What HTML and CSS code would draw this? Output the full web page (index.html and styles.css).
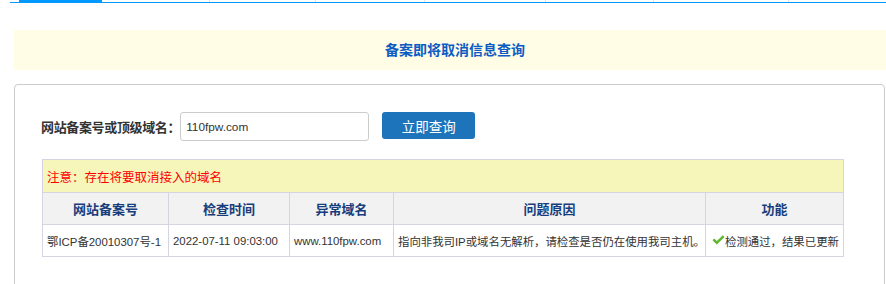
FILE: index.html
```html
<!DOCTYPE html>
<html lang="zh-CN">
<head>
    <meta charset="UTF-8">
    <title>备案即将取消信息查询</title>
    <link rel="stylesheet" href="styles.css">
</head>
<body>

    <!-- 顶部标签栏 -->
    <div class="tabs">
        <span class="tab active" style="width: 83px"></span>
        <span class="tab" style="width: 108px"></span>
        <span class="tab" style="width: 106px"></span>
        <span class="tab" style="width: 109px"></span>
        <span class="tab" style="width: 121px"></span>
        <span class="tab" style="width: 108px"></span>
        <span class="tab" style="width: 135px"></span>
    </div>

    <div class="title-bar">
        <h2>备案即将取消信息查询</h2>
    </div>

    <div class="query-box">
        <form class="query-form">
            <label for="domain">网站备案号或顶级域名：</label>
            <input type="text" id="domain" name="domain" value="110fpw.com">
            <button type="button" class="query-btn">立即查询</button>
        </form>

        <table class="result-table">
            <colgroup>
                <col style="width: 126px">
                <col style="width: 121px">
                <col style="width: 104px">
                <col style="width: 312px">
                <col style="width: 138px">
            </colgroup>
            <tr class="notice-row">
                <td colspan="5">注意：存在将要取消接入的域名</td>
            </tr>
            <tr class="head-row">
                <th>网站备案号</th>
                <th>检查时间</th>
                <th>异常域名</th>
                <th>问题原因</th>
                <th>功能</th>
            </tr>
            <tr class="data-row">
                <td>鄂ICP备20010307号-1</td>
                <td>2022-07-11 09:03:00</td>
                <td>www.110fpw.com</td>
                <td>指向非我司IP或域名无解析，请检查是否仍在使用我司主机。</td>
                <td>
                    <svg class="ok-icon" width="13" height="10" viewBox="0 0 13 10">
                        <path d="M0.5 5.2 L2.3 3.6 L4.8 5.9 L10.9 0.3 L12.6 1.9 L4.8 9.6 Z" fill="#5cb82e"/>
                    </svg>检测通过，结果已更新
                </td>
            </tr>
        </table>
    </div>

</body>
</html>
```

FILE: styles.css
```css
body {
    margin: 0;
    font-family: "Liberation Sans", "Noto Sans CJK SC", sans-serif;
    color: #333;
    overflow: hidden;
}

.tabs {
    display: flex;
    height: 2px;
    margin-left: 10px;
    padding-left: 9px;
    border-bottom: 1px solid #0099ff;
}

.tabs .tab {
    display: block;
    box-sizing: border-box;
    height: 2px;
    border-right: 1px solid #e2e2e2;
}

.tabs .tab.active {
    background: #0099ff;
    border-right: none;
}

.title-bar {
    margin: 27px 0 0 14px;
    height: 40px;
    background: #fffde5;
    padding-left: 10px;
    text-align: center;
}

.title-bar h2 {
    margin: 0;
    font-size: 14px;
    line-height: 40px;
    color: #0d5cc4;
    font-weight: bold;
}

.query-box {
    margin: 14px 0 0 14px;
    width: 871px;
    height: 240px;
    box-sizing: border-box;
    border: 1px solid #cccccc;
    border-radius: 4px;
    padding: 27px 0 0 27px;
}

.query-form {
    display: flex;
    align-items: center;
    margin: 0 0 0 -1px;
}

.query-form label {
    font-size: 13px;
    font-weight: bold;
    color: #333;
    letter-spacing: -0.35px;
}

.query-form input {
    width: 189px;
    height: 29px;
    box-sizing: border-box;
    border: 1px solid #cccccc;
    border-radius: 3px;
    padding: 0 5px;
    font-family: "Liberation Sans", sans-serif;
    font-size: 11.8px;
    color: #333;
    margin: 0;
    align-self: flex-start;
}

.query-btn {
    width: 93px;
    height: 27px;
    margin-left: 13px;
    border: none;
    border-radius: 3px;
    background: #1e74ba;
    color: #fff;
    font-family: "Liberation Sans", "Noto Sans CJK SC", sans-serif;
    font-size: 13.5px;
    padding: 0;
    align-self: flex-start;
}

.result-table {
    margin-top: 18px;
    width: 802px;
    border-collapse: collapse;
    table-layout: fixed;
}

.result-table td, .result-table th {
    border: 1px solid #d4d4e2;
    padding: 0 4px;
}

.notice-row td {
    height: 32px;
    background: #f6f6bb;
    color: #ff0000;
    font-size: 12.5px;
}

.head-row th {
    height: 31px;
    background: #f2f2f2;
    color: #173d7c;
    font-size: 13px;
    text-align: center;
}

.data-row td {
    height: 31px;
    font-size: 11.4px;
    color: #333;
    white-space: nowrap;
}

.ok-icon {
    vertical-align: 1px;
    margin-left: 2px;
}
```
